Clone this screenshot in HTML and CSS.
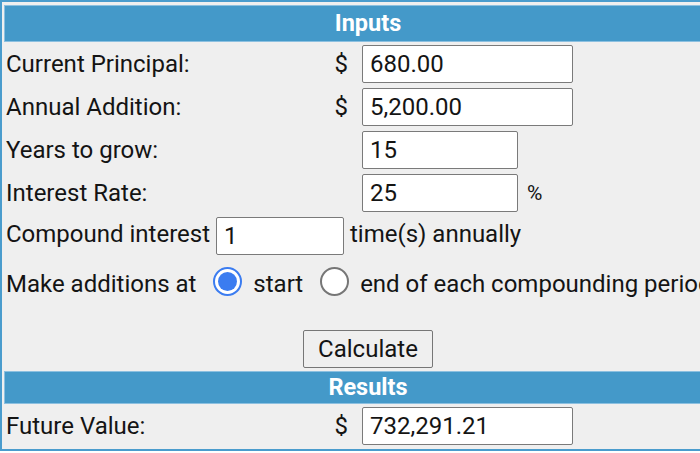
FILE: index.html
```html
<!DOCTYPE html>
<html>
<head>
<meta charset="utf-8">
<link rel="stylesheet" href="styles.css">
</head>
<body>
<form class="calc">
<table class="grid">
  <tr><th colspan="3" class="head head-inputs">Inputs</th></tr>
  <tr>
    <td class="label">Current Principal:</td>
    <td class="cur">$</td>
    <td class="val"><input class="field wide" type="text" value="680.00"></td>
  </tr>
  <tr>
    <td class="label">Annual Addition:</td>
    <td class="cur">$</td>
    <td class="val"><input class="field wide" type="text" value="5,200.00"></td>
  </tr>
  <tr>
    <td class="label">Years to grow:</td>
    <td class="cur"></td>
    <td class="val"><input class="field mid" type="text" value="15"></td>
  </tr>
  <tr>
    <td class="label">Interest Rate:</td>
    <td class="cur"></td>
    <td class="val"><input class="field mid" type="text" value="25"><span class="pct">%</span></td>
  </tr>
  <tr>
    <td colspan="3" class="line">Compound interest <input class="field small" type="text" value="1"> time(s) annually</td>
  </tr>
  <tr>
    <td colspan="3" class="line radios">Make additions at <span class="radio on"></span> start <span class="radio"></span> end of each compounding period</td>
  </tr>
  <tr>
    <td colspan="3" class="btnrow"><button type="button" class="btn">Calculate</button></td>
  </tr>
  <tr><th colspan="3" class="head head-results">Results</th></tr>
  <tr>
    <td class="label">Future Value:</td>
    <td class="cur">$</td>
    <td class="val"><input class="field wide" type="text" value="732,291.21"></td>
  </tr>
</table>
</form>
</body>
</html>
```

FILE: styles.css
```css
html, body {
  margin: 0;
  padding: 0;
  overflow: hidden;
  background: #ffffff;
}
body {
  font-family: Roboto, "Liberation Sans", Arial, sans-serif;
  font-size: 24px;
  color: #141414;
}
.calc {
  margin: 0;
}
.grid {
  width: 736px;
  border: 2px solid #4a9ccd;
  border-spacing: 2px 0;
  background: #efefef;
  padding-top: 3px;
  padding-bottom: 2px;
}
.grid td, .grid th {
  padding: 0 2px;
  white-space: nowrap;
}
.head {
  background: #4499c9;
  color: #ffffff;
  font-weight: bold;
  font-size: 23.5px;
  text-align: center;
  border: 1px solid #8cc0e0;
  line-height: 1;
}
.head-inputs {
  height: 35px;
}
.head-results {
  height: 31px;
}
.label {
  width: 316px;
  height: 43px;
}
.cur {
  width: 20px;
  text-align: right;
  padding-right: 10px !important;
}
.val {
  padding-left: 2px;
}
.field {
  font-family: Roboto, "Liberation Sans", Arial, sans-serif;
  font-size: 24px;
  color: #141414;
  height: 38px;
  box-sizing: border-box;
  border: 1px solid #7a7a7a;
  border-radius: 2px;
  padding: 0 7px;
  background: #ffffff;
  vertical-align: middle;
  margin: 0;
}
.wide { width: 211px; }
.mid { width: 156px; }
.small { width: 128px; }
.pct {
  font-size: 21px;
  margin-left: 9px;
  vertical-align: middle;
}
.line {
  height: 43px;
}
.radios {
  height: 52px;
  vertical-align: top;
  padding-top: 10px !important;
}
.radio {
  display: inline-block;
  width: 29px;
  height: 29px;
  box-sizing: border-box;
  border-radius: 50%;
  border: 2px solid #767676;
  background: #ffffff;
  vertical-align: -4px;
  margin: 0 5px 0 11px;
  position: relative;
}
.radio.on {
  border: 2px solid #3b7cf0;
}
.radio.on::after {
  content: "";
  position: absolute;
  left: 3px;
  top: 3px;
  width: 19px;
  height: 19px;
  border-radius: 50%;
  background: #3b7cf0;
}
.btnrow {
  text-align: center;
  height: 49px;
  vertical-align: bottom;
  padding-bottom: 3px !important;
}
.btn {
  font-family: Roboto, "Liberation Sans", Arial, sans-serif;
  font-size: 24px;
  color: #141414;
  background: #efefef;
  border: 1px solid #767676;
  border-radius: 2px;
  height: 38px;
  width: 130px;
  padding: 0;
}
```
